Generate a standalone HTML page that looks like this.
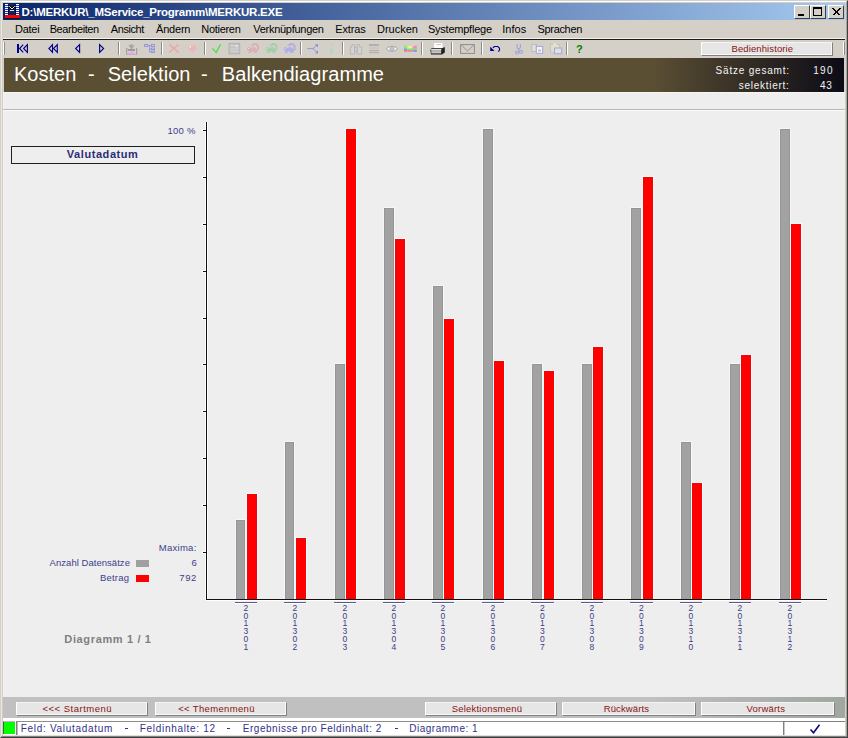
<!DOCTYPE html>
<html><head><meta charset="utf-8">
<style>
*{margin:0;padding:0;box-sizing:border-box}
html,body{width:848px;height:738px;overflow:hidden}
body{position:relative;background:#d4d0c8;font-family:"Liberation Sans",sans-serif}
.a{position:absolute}
.t{position:absolute;white-space:pre;line-height:1}
.btn{position:absolute;background:#e6e6e6;border-top:1px solid #f4f4f4;border-left:1px solid #fff;border-right:1px solid #808080;border-bottom:1px solid #808080;box-shadow:inset -1px -1px #fafafa;color:#9a1c1c;font-size:10px;text-align:center;line-height:12px}
.sep{position:absolute;top:42px;width:2px;height:13px;border-left:1px solid #808080;border-right:1px solid #fff}
.dig{position:absolute;top:605px;width:12px;font-size:8.5px;line-height:7.7px;color:#3c3c84;text-align:center}
.ul{position:absolute;top:602px;height:2px;border-top:1px solid #5a5a90;border-bottom:1px solid #fff}
</style></head><body>
<!-- window frame -->
<div class="a" style="left:0;top:0;width:848px;height:738px;border-left:1px solid #d4d0c8;border-top:1px solid #d4d0c8;border-right:1px solid #404040;border-bottom:1px solid #404040"></div>
<div class="a" style="left:1px;top:1px;width:846px;height:736px;border-left:1px solid #ebe9e3;border-top:1px solid #fff;border-right:1px solid #a8a6a0;border-bottom:1px solid #808080"></div>
<div class="a" style="left:2px;top:20px;width:1px;height:716px;background:#d0ccc2"></div>

<!-- title bar -->
<div class="a" style="left:3px;top:3px;width:842px;height:17px;background:linear-gradient(to right,#0a246a,#a6caf0)"></div>
<svg class="a" style="left:3px;top:3px" width="17" height="17" viewBox="0 0 17 17">
<rect x="0" y="0" width="17" height="17" fill="#0a246a"/>
<g fill="#2838c8">
<rect x="2" y="1" width="3" height="11"/><rect x="13" y="1" width="3" height="11"/>
</g>
<g fill="#fff">
<rect x="2" y="1" width="3" height="1"/><rect x="13" y="1" width="3" height="1"/>
<rect x="2" y="3" width="3" height="1"/><rect x="13" y="3" width="3" height="1"/>
<rect x="2" y="5" width="3" height="1"/><rect x="13" y="5" width="3" height="1"/>
<rect x="2" y="7" width="3" height="1"/><rect x="13" y="7" width="3" height="1"/>
<rect x="2" y="9" width="3" height="1"/><rect x="13" y="9" width="3" height="1"/>
<rect x="2" y="11" width="3" height="1"/><rect x="13" y="11" width="3" height="1"/>
</g>
<path d="M5 3.5 H6.5 L9 6 L11.5 3.5 H13" stroke="#000" stroke-width="2.2" fill="none"/>
<path d="M5 3.5 H6.5 L9 6 L11.5 3.5 H13" stroke="#f0f0e0" stroke-width="1" fill="none"/>
<rect x="7" y="7" width="4" height="1" fill="#e8e8c8"/>
<rect x="5" y="2" width="1" height="10" fill="#000" opacity="0.6"/><rect x="12" y="2" width="1" height="10" fill="#000" opacity="0.6"/>
<rect x="2" y="12" width="15" height="3" fill="#f00"/>
<rect x="2" y="15" width="15" height="1" fill="#000" opacity="0.5"/>
</svg>
<!-- title buttons -->
<div class="a" style="left:794px;top:5px;width:16px;height:14px;background:#d4d0c8;border-top:1px solid #fff;border-left:1px solid #fff;border-right:1px solid #404040;border-bottom:1px solid #404040"><div class="a" style="left:3px;top:8px;width:6px;height:2px;background:#000"></div></div>
<div class="a" style="left:810px;top:5px;width:16px;height:14px;background:#d4d0c8;border-top:1px solid #fff;border-left:1px solid #fff;border-right:1px solid #404040;border-bottom:1px solid #404040"><div class="a" style="left:2px;top:1px;width:9px;height:9px;border:1px solid #000;border-top-width:2px"></div></div>
<div class="a" style="left:828px;top:5px;width:16px;height:14px;background:#d4d0c8;border-top:1px solid #fff;border-left:1px solid #fff;border-right:1px solid #404040;border-bottom:1px solid #404040">
<svg class="a" style="left:3px;top:2px" width="9" height="8" viewBox="0 0 9 8"><path d="M0.5 0.5 L7.5 7.5 M1.5 0.5 L8.5 7.5 M7.5 0.5 L0.5 7.5 M8.5 0.5 L1.5 7.5" stroke="#000" stroke-width="1" shape-rendering="crispEdges"/></svg></div>

<!-- menu -->
<div class="a" style="left:3px;top:38px;width:842px;height:1px;background:#f4f2ec"></div>
<div class="a" style="left:3px;top:39px;width:842px;height:1px;background:#1a1a1a"></div>

<!-- toolbar -->
<svg class="a" style="left:0;top:40px" width="848" height="17" viewBox="0 40 848 17">
<!-- grip -->
<rect x="3" y="42" width="1" height="13" fill="#fff"/><rect x="4" y="42" width="1" height="13" fill="#909090"/>
<!-- separators -->
<g>
<rect x="118" y="42" width="1" height="13" fill="#8a8a8a"/><rect x="119" y="42" width="1" height="13" fill="#fff"/>
<rect x="161" y="42" width="1" height="13" fill="#8a8a8a"/><rect x="162" y="42" width="1" height="13" fill="#fff"/>
<rect x="204" y="42" width="1" height="13" fill="#8a8a8a"/><rect x="205" y="42" width="1" height="13" fill="#fff"/>
<rect x="300" y="42" width="1" height="13" fill="#8a8a8a"/><rect x="301" y="42" width="1" height="13" fill="#fff"/>
<rect x="342" y="42" width="1" height="13" fill="#8a8a8a"/><rect x="343" y="42" width="1" height="13" fill="#fff"/>
<rect x="421" y="42" width="1" height="13" fill="#8a8a8a"/><rect x="422" y="42" width="1" height="13" fill="#fff"/>
<rect x="451" y="42" width="1" height="13" fill="#8a8a8a"/><rect x="452" y="42" width="1" height="13" fill="#fff"/>
<rect x="481" y="42" width="1" height="13" fill="#8a8a8a"/><rect x="482" y="42" width="1" height="13" fill="#fff"/>
<rect x="566" y="42" width="1" height="13" fill="#8a8a8a"/><rect x="567" y="42" width="1" height="13" fill="#fff"/>
<rect x="843" y="42" width="1" height="13" fill="#fff"/><rect x="844" y="42" width="1" height="13" fill="#8a8a8a"/>
</g>
<!-- nav icons -->
<g fill="none" stroke="#00008a" stroke-width="1.15" stroke-linejoin="miter">
<rect x="17" y="44" width="2" height="9" fill="#00008a" stroke="none"/>
<path d="M23.2 44.6 L19.6 48.5 L23.2 52.4"/>
<path d="M27.4 44.6 L23.6 48.5 L27.4 52.4 Z"/>
<path d="M52.5 44.6 L48.9 48.5 L52.5 52.4 Z"/>
<path d="M57.3 44.6 L53.5 48.5 L57.3 52.4 Z"/>
<path d="M79.6 44.6 L75.6 48.5 L79.6 52.4 Z"/>
<path d="M99.6 44.6 L103.6 48.5 L99.6 52.4 Z"/>
</g>
<!-- tray with arrow -->
<g>
<path d="M128.2 45.3 L134.8 45.3 L132.3 48.2 L132.3 49 L130.7 49 L130.7 48.2 Z" fill="#a4a4a4"/>
<rect x="130.7" y="44" width="1.6" height="1.5" fill="#a4a4a4"/>
<rect x="128" y="49" width="7" height="2" fill="#9a9a9a"/>
<rect x="126" y="48" width="1.4" height="6.5" fill="#a0a0a0"/>
<rect x="136" y="48" width="1.2" height="6.5" fill="#a0a0a0"/>
<rect x="126" y="53.8" width="11.2" height="0.8" fill="#a8a8a8"/>
<rect x="127.4" y="51" width="8.6" height="2.8" fill="#d0d0cc"/>
<path d="M128 54 L128 53 L130.5 52.3 L131.5 51 L133 52.3 L135 53 L135 54 Z" fill="#f0a0f0"/>
</g>
<!-- tree -->
<g fill="#d0d0e4" stroke="#9898d8" stroke-width="1">
<rect x="144.5" y="44.5" width="3" height="2"/>
<rect x="151.5" y="44.5" width="3" height="2"/>
<rect x="151.5" y="48" width="3" height="1.5"/>
<rect x="151.5" y="51" width="3" height="1.5"/>
<path d="M147.5 45.5 H151.5 M149.5 45.5 V52 M149.5 49 H151.5 M149.5 52 H151.5" fill="none"/>
</g>
<!-- X -->
<path d="M169.3 44.4 L178.8 52.6 M178.5 44.4 L169.3 52.6" stroke="#f0a4a4" stroke-width="1.4" fill="none"/>
<!-- heart -->
<path d="M192 46.3 C191 44.8 188 44.8 188 47.3 C188 49.3 190.5 51 192.3 52.6 C194 51 196.5 49.3 196.5 47.3 C196.5 44.8 193.5 44.8 192 46.3 Z" fill="#f0b4b8"/>
<rect x="189.5" y="46" width="1.5" height="1.5" fill="#fff" opacity="0.8"/>
<!-- check -->
<path d="M212.3 48.4 L216.2 52.4 L220.6 44.3" stroke="#48e048" stroke-width="1.35" fill="none"/>
<!-- grey box -->
<rect x="229" y="43.3" width="10.8" height="10.6" fill="#c4c4c4" stroke="#b0b0b0" stroke-width="0.8"/>
<rect x="230.5" y="45" width="3" height="1" fill="#dadada"/><rect x="235" y="45" width="3" height="2" fill="#e0e0e0"/>
<rect x="230.5" y="48.5" width="8" height="1" fill="#d4d4d4"/><rect x="230.5" y="51" width="8" height="1" fill="#d4d4d4"/>
<!-- squirrels -->
<path transform="translate(245 42)" d="M8 1h4v1h-4zM7 2h6v1h-6zM6 3h3v1h-3zM11 3h3v1h-3zM12 4h2v1h-2zM3 5h2v1h-2zM7 5h3v1h-3zM12 5h2v1h-2zM2 6h9v1h-9zM12 6h2v1h-2zM2 7h12v1h-12zM3 8h10v1h-10zM4 9h3v1h-3zM8 9h4v1h-4zM3 10h3v1h-3zM9 10h3v1h-3z" fill="#dcb0b8"/>
<rect x="248" y="48" width="1" height="1" fill="#e8e4dc"/>
<path transform="translate(263.5 42)" d="M8 1h4v1h-4zM7 2h6v1h-6zM6 3h3v1h-3zM11 3h3v1h-3zM12 4h2v1h-2zM3 5h2v1h-2zM7 5h3v1h-3zM12 5h2v1h-2zM2 6h9v1h-9zM12 6h2v1h-2zM2 7h12v1h-12zM3 8h10v1h-10zM4 9h3v1h-3zM8 9h4v1h-4zM3 10h3v1h-3zM9 10h3v1h-3z" fill="#a4cfac"/>
<rect x="266.5" y="48" width="1" height="1" fill="#e8e4dc"/>
<path transform="translate(281.5 42)" d="M8 1h4v1h-4zM7 2h6v1h-6zM6 3h3v1h-3zM11 3h3v1h-3zM12 4h2v1h-2zM3 5h2v1h-2zM7 5h3v1h-3zM12 5h2v1h-2zM2 6h9v1h-9zM12 6h2v1h-2zM2 7h12v1h-12zM3 8h10v1h-10zM4 9h3v1h-3zM8 9h4v1h-4zM3 10h3v1h-3zM9 10h3v1h-3z" fill="#b0b0e6"/>
<rect x="284.5" y="48" width="1" height="1" fill="#e8e4dc"/>
<!-- split -->
<g stroke="#9494e0" stroke-width="1" fill="none"><path d="M307.2 48.6 H313 L317 45 M313 48.6 L317 52.4"/></g>
<path d="M314.8 44.2 H318 V47.4 Z M314.8 53.4 H318 V50.2 Z" fill="#8c8ce0"/>
<!-- i -->
<circle cx="331.5" cy="44.8" r="1.3" fill="#b4d6c4"/>
<rect x="330.2" y="47.6" width="2.8" height="6.4" fill="#b4d6c4"/>
<!-- binoculars -->
<g fill="#d4d4d4" stroke="#b4b4b4" stroke-width="0.9">
<path d="M350.4 47 H352 V44.5 H354.5 V54 H350.4 Z"/>
<path d="M357 44.5 H359.5 V47 H361.6 V54 H357 Z"/>
<rect x="354.5" y="47.5" width="2.5" height="3.5"/>
</g>
<!-- lines -->
<rect x="369" y="44.2" width="10" height="1.6" fill="#a8a8a8"/>
<rect x="369" y="47.2" width="10" height="1.6" fill="#c6c6c6"/>
<rect x="369" y="50.2" width="10" height="0.9" fill="#a8a8a8"/>
<rect x="369" y="52.2" width="10" height="0.9" fill="#a8a8a8"/>
<!-- eye -->
<path d="M386.3 48.8 C389 45.5 395 45.5 397.6 48.8 C395 52 389 52 386.3 48.8 Z" fill="#ececec" stroke="#a4a4a4" stroke-width="1"/>
<circle cx="392" cy="48.8" r="1.9" fill="#c0c0d4" stroke="#a8a8b8" stroke-width="0.6"/>
<!-- candy -->
<g>
<path d="M404 45 L408 47 L408 51 L404 52 Z" fill="#88e888"/>
<path d="M404 48.5 L408 49 L408 51 L404 52 Z" fill="#9090f0"/>
<path d="M404 50.5 L408 50.5 L408 52 L404 52 Z" fill="#f08888"/>
<rect x="407.5" y="46" width="5" height="6" fill="#f0f080"/>
<rect x="407.5" y="48.5" width="5" height="1.5" fill="#80e080"/>
<rect x="407.5" y="50" width="5" height="2" fill="#f08898"/>
<path d="M416.7 45 L412.5 47 L412.5 51 L416.7 52 Z" fill="#f088c8"/>
<path d="M416.7 48 L412.5 48.5 L412.5 50 L416.7 50 Z" fill="#80e080"/>
<path d="M416.7 50 L412.5 50 L412.5 51.5 L416.7 52 Z" fill="#9090f0"/>
</g>
<!-- printer -->
<g>
<rect x="434.2" y="43" width="8.3" height="5" fill="#fff"/>
<rect x="436" y="44.3" width="5" height="0.8" fill="#b8b8b8"/>
<path d="M431.5 48.2 H442 L444.8 47 V52.5 L442 54.4 H431 L430.4 50 Z" fill="#202020"/>
<rect x="431.2" y="49.2" width="10" height="4.3" fill="#a8a8a8"/>
<rect x="431.2" y="49.2" width="10" height="1" fill="#f0f0f0"/>
<rect x="432" y="51.8" width="9" height="0.8" fill="#e0e0e0"/>
</g>
<!-- envelope -->
<rect x="460.6" y="44.6" width="13.8" height="8.8" fill="none" stroke="#8c8c8c" stroke-width="1"/>
<path d="M461.5 45.2 L467.5 51 L473.6 45.2" fill="none" stroke="#909090" stroke-width="1"/>
<!-- undo -->
<path d="M490.2 46.8 L490.2 51 L494.6 51 Z" fill="#000090"/>
<path d="M492.8 47.8 L494.5 46.5 H497.8 L499.5 48.2 V49.8 L498.5 51.8" stroke="#000090" stroke-width="1.1" fill="none"/>
<!-- scissors -->
<g stroke="#a0a0e0" stroke-width="1.1" fill="none">
<path d="M517.2 44 V47.5 L518.8 49.5 V50.5 M520.4 44 V47.5 L518.8 49.5"/>
<circle cx="517" cy="52.5" r="1.5"/><circle cx="521" cy="51.7" r="1.5"/>
</g>
<!-- copy -->
<rect x="531.8" y="44.4" width="4.5" height="7" fill="#e0e0e0" stroke="#b8b8b8" stroke-width="0.9"/>
<rect x="536.3" y="46.4" width="6.4" height="6.9" fill="#f4f4f4" stroke="#a8a8e0" stroke-width="1.1"/>
<rect x="538" y="49.5" width="3" height="2" fill="#c0c0c0"/>
<!-- paste -->
<rect x="550.4" y="44.4" width="9" height="8" fill="#e0e0d0" stroke="#c0c0b8" stroke-width="0.9"/>
<rect x="553" y="43.6" width="3.5" height="1.6" fill="#e8e8b8"/>
<rect x="554.5" y="48" width="7.2" height="5.7" fill="#e0e0e0" stroke="#a8a8e0" stroke-width="1.1"/>
<!-- ? -->
<text x="576" y="53" font-family="Liberation Sans" font-weight="bold" font-size="11" fill="#008000">?</text>
</svg>

<div class="btn" style="left:701px;top:42px;width:132px;height:14px"></div>

<!-- header -->
<div class="a" style="left:4px;top:58px;width:840px;height:34px;background:linear-gradient(to right,#5a4e33 0,#5a4e33 650px,#0c0b16 840px)"></div>

<!-- content -->
<div class="a" style="left:3px;top:92px;width:842px;height:605px;background:#eeeeee"></div>
<div class="a" style="left:3px;top:92px;width:1px;height:605px;background:#f4f4f4"></div>
<div class="a" style="left:3px;top:92px;width:842px;height:1px;background:#f6f6f2"></div>
<div class="a" style="left:3px;top:109px;width:842px;height:1px;background:#b8b8b8"></div>
<div class="a" style="left:3px;top:110px;width:842px;height:1px;background:#fafafa"></div>

<div class="a" style="left:11px;top:146px;width:184px;height:18px;border:1px solid #202020"></div>
<div class="a" style="left:136px;top:560px;width:13px;height:7px;background:#a0a0a0"></div>
<div class="a" style="left:136px;top:575px;width:13px;height:7px;background:#f00"></div>

<!-- chart -->
<div class="a" style="left:205px;top:122px;width:3px;height:478px;background:#fff"></div>
<div class="a" style="left:206px;top:122px;width:1px;height:478px;background:#111"></div>
<div class="a" style="left:202px;top:129px;width:4px;height:3px;background:#fff"></div>
<div class="a" style="left:203px;top:130px;width:4px;height:1px;background:#111"></div>
<div class="a" style="left:202px;top:176px;width:4px;height:3px;background:#fff"></div>
<div class="a" style="left:203px;top:177px;width:4px;height:1px;background:#111"></div>
<div class="a" style="left:202px;top:223px;width:4px;height:3px;background:#fff"></div>
<div class="a" style="left:203px;top:224px;width:4px;height:1px;background:#111"></div>
<div class="a" style="left:202px;top:270px;width:4px;height:3px;background:#fff"></div>
<div class="a" style="left:203px;top:271px;width:4px;height:1px;background:#111"></div>
<div class="a" style="left:202px;top:317px;width:4px;height:3px;background:#fff"></div>
<div class="a" style="left:203px;top:318px;width:4px;height:1px;background:#111"></div>
<div class="a" style="left:202px;top:363px;width:4px;height:3px;background:#fff"></div>
<div class="a" style="left:203px;top:364px;width:4px;height:1px;background:#111"></div>
<div class="a" style="left:202px;top:410px;width:4px;height:3px;background:#fff"></div>
<div class="a" style="left:203px;top:411px;width:4px;height:1px;background:#111"></div>
<div class="a" style="left:202px;top:457px;width:4px;height:3px;background:#fff"></div>
<div class="a" style="left:203px;top:458px;width:4px;height:1px;background:#111"></div>
<div class="a" style="left:202px;top:504px;width:4px;height:3px;background:#fff"></div>
<div class="a" style="left:203px;top:505px;width:4px;height:1px;background:#111"></div>
<div class="a" style="left:202px;top:551px;width:4px;height:3px;background:#fff"></div>
<div class="a" style="left:203px;top:552px;width:4px;height:1px;background:#111"></div>
<div class="a" style="left:206px;top:600px;width:621px;height:1px;background:#fff"></div>
<div class="a" style="left:235px;top:519px;width:11px;height:80px;background:#f6f6f6"></div>
<div class="a" style="left:236px;top:520px;width:9px;height:79px;background:#a2a2a2;border:1px solid #969696;border-bottom:0"></div>
<div class="a" style="left:246px;top:493px;width:12px;height:106px;background:#eaffff"></div>
<div class="a" style="left:247px;top:494px;width:10px;height:105px;background:#ff0000"></div>
<div class="ul" style="left:235px;width:22px"></div>
<div class="dig" style="left:239.8px">2<br>0<br>1<br>3<br>0<br>1</div>
<div class="a" style="left:284px;top:441px;width:11px;height:158px;background:#f6f6f6"></div>
<div class="a" style="left:285px;top:442px;width:9px;height:157px;background:#a2a2a2;border:1px solid #969696;border-bottom:0"></div>
<div class="a" style="left:295px;top:537px;width:12px;height:62px;background:#eaffff"></div>
<div class="a" style="left:296px;top:538px;width:10px;height:61px;background:#ff0000"></div>
<div class="ul" style="left:284px;width:22px"></div>
<div class="dig" style="left:288.8px">2<br>0<br>1<br>3<br>0<br>2</div>
<div class="a" style="left:334px;top:363px;width:12px;height:236px;background:#f6f6f6"></div>
<div class="a" style="left:335px;top:364px;width:10px;height:235px;background:#a2a2a2;border:1px solid #969696;border-bottom:0"></div>
<div class="a" style="left:345px;top:128px;width:12px;height:471px;background:#eaffff"></div>
<div class="a" style="left:346px;top:129px;width:10px;height:470px;background:#ff0000"></div>
<div class="ul" style="left:334px;width:22px"></div>
<div class="dig" style="left:338.8px">2<br>0<br>1<br>3<br>0<br>3</div>
<div class="a" style="left:383px;top:207px;width:12px;height:392px;background:#f6f6f6"></div>
<div class="a" style="left:384px;top:208px;width:10px;height:391px;background:#a2a2a2;border:1px solid #969696;border-bottom:0"></div>
<div class="a" style="left:394px;top:238px;width:12px;height:361px;background:#eaffff"></div>
<div class="a" style="left:395px;top:239px;width:10px;height:360px;background:#ff0000"></div>
<div class="ul" style="left:383px;width:22px"></div>
<div class="dig" style="left:387.8px">2<br>0<br>1<br>3<br>0<br>4</div>
<div class="a" style="left:432px;top:285px;width:12px;height:314px;background:#f6f6f6"></div>
<div class="a" style="left:433px;top:286px;width:10px;height:313px;background:#a2a2a2;border:1px solid #969696;border-bottom:0"></div>
<div class="a" style="left:443px;top:318px;width:12px;height:281px;background:#eaffff"></div>
<div class="a" style="left:444px;top:319px;width:10px;height:280px;background:#ff0000"></div>
<div class="ul" style="left:432px;width:22px"></div>
<div class="dig" style="left:436.8px">2<br>0<br>1<br>3<br>0<br>5</div>
<div class="a" style="left:482px;top:128px;width:12px;height:471px;background:#f6f6f6"></div>
<div class="a" style="left:483px;top:129px;width:10px;height:470px;background:#a2a2a2;border:1px solid #969696;border-bottom:0"></div>
<div class="a" style="left:493px;top:360px;width:12px;height:239px;background:#eaffff"></div>
<div class="a" style="left:494px;top:361px;width:10px;height:238px;background:#ff0000"></div>
<div class="ul" style="left:482px;width:22px"></div>
<div class="dig" style="left:486.8px">2<br>0<br>1<br>3<br>0<br>6</div>
<div class="a" style="left:531px;top:363px;width:12px;height:236px;background:#f6f6f6"></div>
<div class="a" style="left:532px;top:364px;width:10px;height:235px;background:#a2a2a2;border:1px solid #969696;border-bottom:0"></div>
<div class="a" style="left:543px;top:370px;width:12px;height:229px;background:#eaffff"></div>
<div class="a" style="left:544px;top:371px;width:10px;height:228px;background:#ff0000"></div>
<div class="ul" style="left:531px;width:23px"></div>
<div class="dig" style="left:536.3px">2<br>0<br>1<br>3<br>0<br>7</div>
<div class="a" style="left:581px;top:363px;width:12px;height:236px;background:#f6f6f6"></div>
<div class="a" style="left:582px;top:364px;width:10px;height:235px;background:#a2a2a2;border:1px solid #969696;border-bottom:0"></div>
<div class="a" style="left:592px;top:346px;width:12px;height:253px;background:#eaffff"></div>
<div class="a" style="left:593px;top:347px;width:10px;height:252px;background:#ff0000"></div>
<div class="ul" style="left:581px;width:22px"></div>
<div class="dig" style="left:585.8px">2<br>0<br>1<br>3<br>0<br>8</div>
<div class="a" style="left:630px;top:207px;width:12px;height:392px;background:#f6f6f6"></div>
<div class="a" style="left:631px;top:208px;width:10px;height:391px;background:#a2a2a2;border:1px solid #969696;border-bottom:0"></div>
<div class="a" style="left:642px;top:176px;width:12px;height:423px;background:#eaffff"></div>
<div class="a" style="left:643px;top:177px;width:10px;height:422px;background:#ff0000"></div>
<div class="ul" style="left:630px;width:23px"></div>
<div class="dig" style="left:635.3px">2<br>0<br>1<br>3<br>0<br>9</div>
<div class="a" style="left:680px;top:441px;width:12px;height:158px;background:#f6f6f6"></div>
<div class="a" style="left:681px;top:442px;width:10px;height:157px;background:#a2a2a2;border:1px solid #969696;border-bottom:0"></div>
<div class="a" style="left:691px;top:482px;width:12px;height:117px;background:#eaffff"></div>
<div class="a" style="left:692px;top:483px;width:10px;height:116px;background:#ff0000"></div>
<div class="ul" style="left:680px;width:22px"></div>
<div class="dig" style="left:684.8px">2<br>0<br>1<br>3<br>1<br>0</div>
<div class="a" style="left:729px;top:363px;width:12px;height:236px;background:#f6f6f6"></div>
<div class="a" style="left:730px;top:364px;width:10px;height:235px;background:#a2a2a2;border:1px solid #969696;border-bottom:0"></div>
<div class="a" style="left:740px;top:354px;width:12px;height:245px;background:#eaffff"></div>
<div class="a" style="left:741px;top:355px;width:10px;height:244px;background:#ff0000"></div>
<div class="ul" style="left:729px;width:22px"></div>
<div class="dig" style="left:733.8px">2<br>0<br>1<br>3<br>1<br>1</div>
<div class="a" style="left:779px;top:128px;width:12px;height:471px;background:#f6f6f6"></div>
<div class="a" style="left:780px;top:129px;width:10px;height:470px;background:#a2a2a2;border:1px solid #969696;border-bottom:0"></div>
<div class="a" style="left:790px;top:223px;width:12px;height:376px;background:#eaffff"></div>
<div class="a" style="left:791px;top:224px;width:10px;height:375px;background:#ff0000"></div>
<div class="ul" style="left:779px;width:22px"></div>
<div class="dig" style="left:783.8px">2<br>0<br>1<br>3<br>1<br>2</div>
<div class="a" style="left:206px;top:599px;width:621px;height:1px;background:#111"></div>

<!-- bottom bar -->
<div class="a" style="left:3px;top:697px;width:842px;height:21px;background:linear-gradient(to right,#c0c0c0 0,#c0c0c0 650px,#a0a6a0 842px)"></div>
<div class="btn" style="left:16px;top:702px;width:132px;height:14px"></div>
<div class="btn" style="left:155px;top:702px;width:132px;height:14px"></div>
<div class="btn" style="left:425px;top:702px;width:132px;height:14px"></div>
<div class="btn" style="left:562px;top:702px;width:134px;height:14px"></div>
<div class="btn" style="left:701px;top:702px;width:134px;height:14px"></div>

<!-- status bar -->
<div class="a" style="left:3px;top:718px;width:842px;height:17px;background:#fff"></div>
<div class="a" style="left:3px;top:735px;width:842px;height:1px;background:#e4e0d8"></div>
<div class="a" style="left:3px;top:721px;width:12px;height:13px;background:#00ff00;border-left:1px solid #208020;border-top:1px solid #e0a0e0"></div>
<div class="a" style="left:16px;top:721px;width:767px;height:14px;border-left:1px solid #808080;border-top:1px solid #8c8c8c;background:#fff"><div class="a" style="left:0;top:0;width:1px;height:13px;background:#b8b8b8"></div></div>
<div class="a" style="left:783px;top:721px;width:62px;height:14px;border-left:1px solid #808080;border-top:1px solid #808080;background:#fff"><div class="a" style="left:0;top:0;width:1px;height:13px;background:#c8c8c8"></div></div>
<svg class="a" style="left:809px;top:724px" width="12" height="10" viewBox="0 0 12 10"><path d="M1.5 5.5 L4.5 8.8 L10.5 0.8" stroke="#00007a" stroke-width="1.5" fill="none"/></svg>
<div class="t" style="left:15.0px;top:24.0px;font-size:11px;color:#000;letter-spacing:-0.25px">Datei</div>
<div class="t" style="left:49.7px;top:24.0px;font-size:11px;color:#000;letter-spacing:-0.411px">Bearbeiten</div>
<div class="t" style="left:110.8px;top:24.0px;font-size:11px;color:#000;letter-spacing:-0.417px">Ansicht</div>
<div class="t" style="left:156.0px;top:24.0px;font-size:11px;color:#000;letter-spacing:-0.2px">Ändern</div>
<div class="t" style="left:201.3px;top:24.0px;font-size:11px;color:#000;letter-spacing:-0.3px">Notieren</div>
<div class="t" style="left:253.2px;top:24.0px;font-size:11px;color:#000;letter-spacing:-0.267px">Verknüpfungen</div>
<div class="t" style="left:335.2px;top:24.0px;font-size:11px;color:#000;letter-spacing:-0.1px">Extras</div>
<div class="t" style="left:377.0px;top:24.0px;font-size:11px;color:#000">Drucken</div>
<div class="t" style="left:427.9px;top:24.0px;font-size:11px;color:#000;letter-spacing:-0.227px">Systempflege</div>
<div class="t" style="left:502.2px;top:24.0px;font-size:11px;color:#000;letter-spacing:0.025px">Infos</div>
<div class="t" style="left:537.6px;top:24.0px;font-size:11px;color:#000;letter-spacing:-0.343px">Sprachen</div>
<div class="t" style="left:21.5px;top:7.3px;font-size:11.5px;color:#fff;font-weight:bold;letter-spacing:-0.224px">D:\MERKUR\_MService_Programm\MERKUR.EXE</div>
<div class="t" style="left:14.0px;top:64.0px;font-size:20px;color:#fff">Kosten</div>
<div class="t" style="left:88.0px;top:64.0px;font-size:20px;color:#fff">-</div>
<div class="t" style="left:107.7px;top:64.0px;font-size:20px;color:#fff;letter-spacing:0.062px">Selektion</div>
<div class="t" style="left:201.0px;top:64.0px;font-size:20px;color:#fff">-</div>
<div class="t" style="left:221.8px;top:64.0px;font-size:20px;color:#fff;letter-spacing:0.071px">Balkendiagramme</div>
<div class="t" style="left:715.6px;top:66.0px;font-size:10px;color:#f4f4f4;letter-spacing:0.792px">Sätze gesamt:</div>
<div class="t" style="left:813.3px;top:66.0px;font-size:10px;color:#f4f4f4;letter-spacing:1.25px">190</div>
<div class="t" style="left:738.7px;top:81.0px;font-size:10px;color:#f4f4f4;letter-spacing:0.73px">selektiert:</div>
<div class="t" style="left:820.0px;top:81.0px;font-size:10px;color:#f4f4f4;letter-spacing:0.8px">43</div>
<div class="t" style="left:731.5px;top:44.0px;font-size:9.5px;color:#8a1212;letter-spacing:0.108px">Bedienhistorie</div>
<div class="t" style="left:167.4px;top:126.0px;font-size:9.5px;color:#40408a;letter-spacing:0.3px">100 %</div>
<div class="t" style="left:66.8px;top:149.0px;font-size:11px;color:#2c2c78;font-weight:bold;letter-spacing:0.57px">Valutadatum</div>
<div class="t" style="left:158.7px;top:542.5px;font-size:9.5px;color:#40408a;letter-spacing:0.283px">Maxima:</div>
<div class="t" style="left:49.6px;top:557.5px;font-size:9.5px;color:#40408a;letter-spacing:0.037px">Anzahl Datensätze</div>
<div class="t" style="left:191.4px;top:557.5px;font-size:9.5px;color:#40408a">6</div>
<div class="t" style="left:100.0px;top:573.0px;font-size:9.5px;color:#40408a;letter-spacing:0.2px">Betrag</div>
<div class="t" style="left:179.3px;top:573.0px;font-size:9.5px;color:#40408a;letter-spacing:0.55px">792</div>
<div class="t" style="left:64.3px;top:633.5px;font-size:11px;color:#808080;font-weight:bold;letter-spacing:0.646px">Diagramm 1 / 1</div>
<div class="t" style="left:42.5px;top:704.0px;font-size:9.5px;color:#8a1212;letter-spacing:0.492px">&lt;&lt;&lt; Startmenü</div>
<div class="t" style="left:178.2px;top:704.0px;font-size:9.5px;color:#8a1212;letter-spacing:0.342px">&lt;&lt; Themenmenü</div>
<div class="t" style="left:451.7px;top:704.0px;font-size:9.5px;color:#8a1212;letter-spacing:0.208px">Selektionsmenü</div>
<div class="t" style="left:603.7px;top:704.0px;font-size:9.5px;color:#8a1212;letter-spacing:0.112px">Rückwärts</div>
<div class="t" style="left:746.5px;top:704.0px;font-size:9.5px;color:#8a1212;letter-spacing:0.214px">Vorwärts</div>
<div class="t" style="left:20.8px;top:724.4px;font-size:10px;color:#32328a;letter-spacing:0.694px">Feld: Valutadatum</div>
<div class="t" style="left:139.8px;top:724.4px;font-size:10px;color:#32328a;letter-spacing:0.686px">Feldinhalte: 12</div>
<div class="t" style="left:242.8px;top:724.4px;font-size:10px;color:#32328a;letter-spacing:0.519px">Ergebnisse pro Feldinhalt: 2</div>
<div class="t" style="left:409.3px;top:724.4px;font-size:10px;color:#32328a;letter-spacing:0.5px">Diagramme: 1</div>
<div class="a" style="left:125px;top:728px;width:3px;height:1px;background:#32328a"></div>
<div class="a" style="left:227px;top:728px;width:3px;height:1px;background:#32328a"></div>
<div class="a" style="left:394.5px;top:728px;width:3px;height:1px;background:#32328a"></div>
</body></html>
